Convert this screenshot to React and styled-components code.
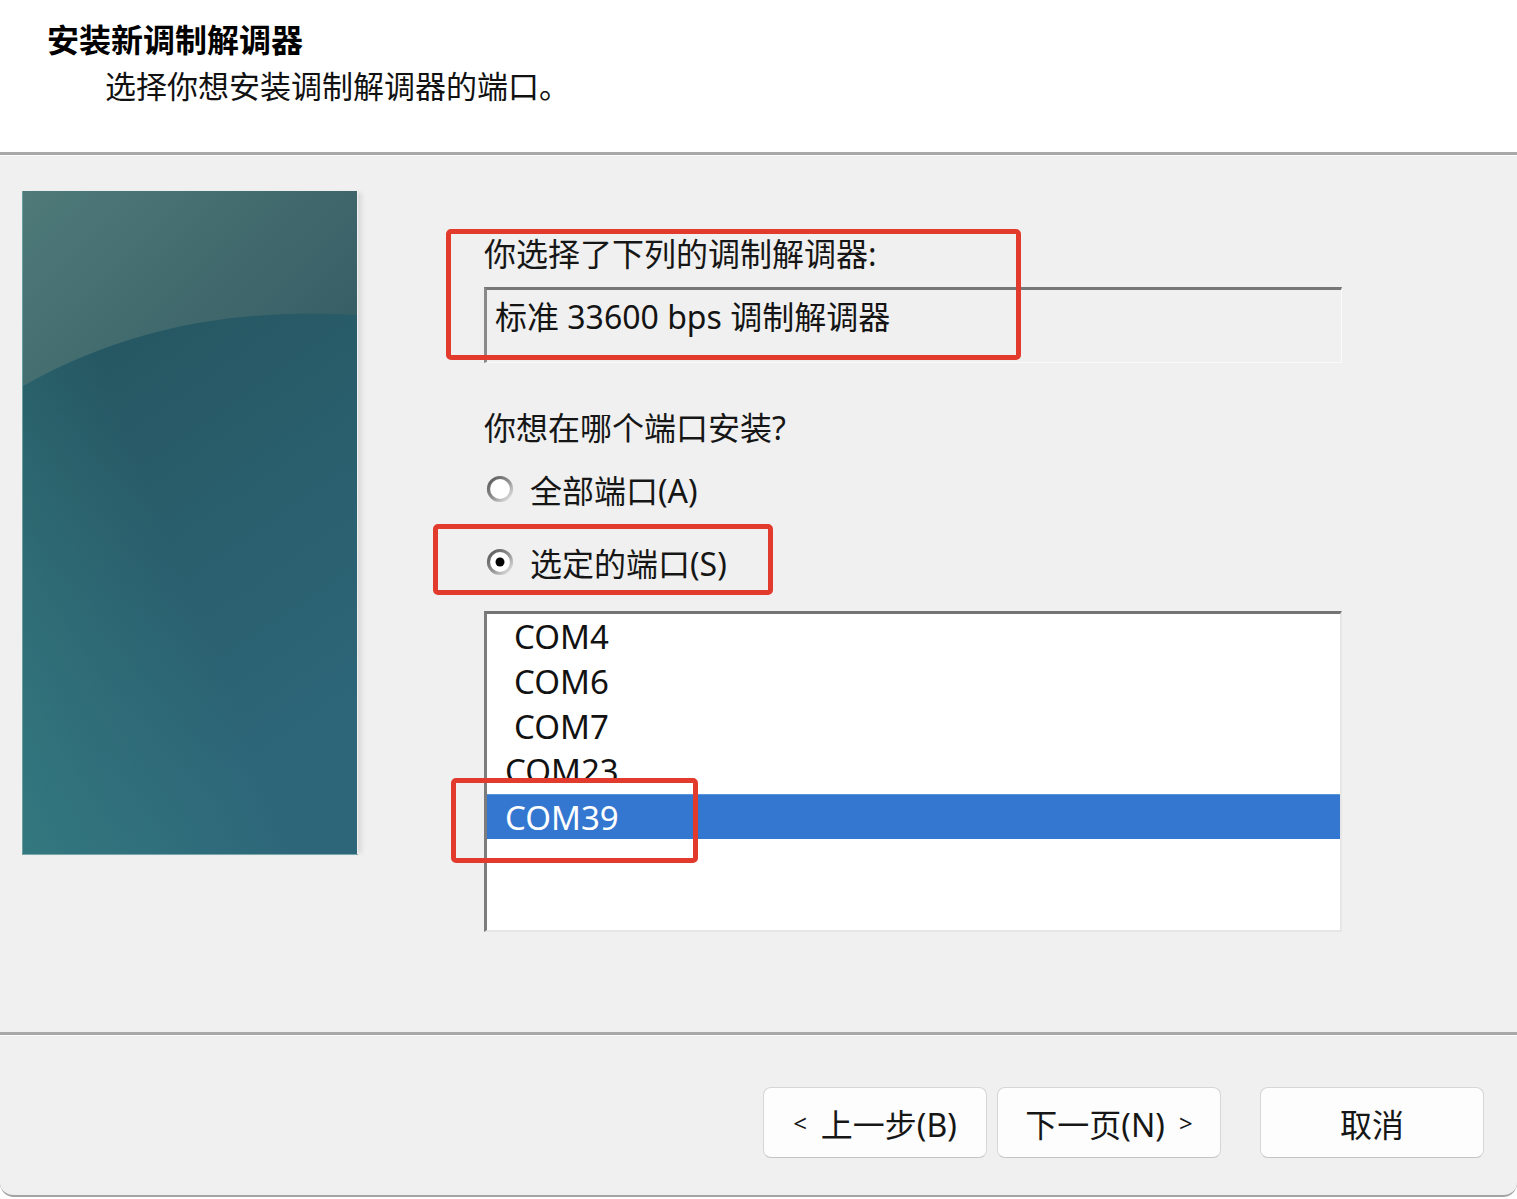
import React from 'react'
import styled, { createGlobalStyle } from 'styled-components'

const GlobalStyle = createGlobalStyle`
  html, body {
    margin: 0;
    padding: 0;
    background: #ffffff;
  }
  body {
    font-family: "Noto Sans", "Noto Sans CJK SC", sans-serif;
    color: #141414;
  }
`

const ports = [
  { name: 'COM4', indent: 27 },
  { name: 'COM6', indent: 27 },
  { name: 'COM7', indent: 27 },
  { name: 'COM23', indent: 18, clipped: true },
  { name: 'COM39', indent: 18, selected: true },
]

// window frame
const Window = styled.div`
  width: 1517px;
  height: 1197px;
  box-sizing: border-box;
  display: flex;
  flex-direction: column;
  background: #f0f0f0;
  border-bottom: 2px solid #a3a3a3;
  border-radius: 0 0 14px 14px;
  overflow: hidden;
`

const Header = styled.header`
  height: 155px;
  flex: none;
  box-sizing: border-box;
  padding: 20px 0 0 47px;
  background: #ffffff;
  border-bottom: 3px solid #a9a9a9;
`

const Title = styled.h1`
  margin: 0;
  font-size: 32px;
  line-height: 40px;
  font-weight: 700;
  color: #000;
`

const Subtitle = styled.p`
  margin: 6px 0 0 58px;
  font-size: 31px;
  line-height: 40px;
  color: #111;
`

const Body = styled.main`
  height: 877px;
  flex: none;
  display: flex;
  align-items: flex-start;
  padding-left: 22px;
  box-sizing: border-box;
  border-top: 1px solid #fbfbfb;
`

const SidePicture = styled.div`
  width: 336px;
  height: 664px;
  margin-top: 35px;
  flex: none;
  box-shadow: 6px 0 4px -2px #dcdcdc;
  border-left: 1px solid #6c9ea0;
  border-bottom: 1px solid #79a7ab;
  box-sizing: border-box;
  svg {
    display: block;
  }
`

const Content = styled.section`
  position: relative;
  margin-left: 126px;
  padding-top: 78px;
  width: 858px;
  display: flex;
  flex-direction: column;
`

const Label = styled.div`
  font-size: 32px;
  line-height: 40px;
  color: #161616;
  margin-top: ${p => p.$gap || 0}px;
  white-space: nowrap;
`

const ReadOnlyBox = styled.div`
  margin-top: 13px;
  height: 76px;
  box-sizing: border-box;
  padding: 7px 8px 0;
  border-top: 3px solid #777;
  border-left: 3px solid #8a8a8a;
  border-right: 1px solid #fafafa;
  border-bottom: 1px solid #fafafa;
  background: #f0f0f0;
  font-size: 32px;
  line-height: 40px;
  color: #141414;
  white-space: nowrap;
`

const RadioRow = styled.label`
  display: flex;
  align-items: center;
  height: 40px;
  margin-top: ${p => p.$gap}px;
  font-size: 32px;
  color: #161616;
  svg {
    flex: none;
    margin: 0 16px 0 2px;
  }
`

const ListBox = styled.ul`
  list-style: none;
  margin: 29px 0 0;
  padding: 0;
  height: 321px;
  box-sizing: border-box;
  background: #ffffff;
  border-top: 3px solid #747474;
  border-left: 3px solid #7c7c7c;
  border-right: 2px solid #e6e6e6;
  border-bottom: 2px solid #e6e6e6;
  overflow: hidden;
`

const ListItem = styled.li`
  height: 45px;
  box-sizing: border-box;
  padding-left: ${p => p.$indent}px;
  font-size: 33px;
  line-height: 45px;
  color: ${p => (p.$selected ? '#ffffff' : '#121212')};
  background: ${p => (p.$selected ? '#3477d0' : 'transparent')};
  border-top: ${p => (p.$selected ? '1px solid #5b93dc' : 'none')};
  span {
    display: block;
    height: ${p => (p.$clipped ? '34px' : 'auto')};
    overflow: hidden;
    transform: ${p => (p.$clipped ? 'translateY(-1px)' : 'none')};
  }
`

// red annotation marks lying over the dialog
const Mark = styled.div`
  position: absolute;
  left: ${p => p.$x}px;
  top: ${p => p.$y}px;
  width: ${p => p.$w}px;
  height: ${p => p.$h}px;
  box-sizing: border-box;
  border: 5px solid #e23a2c;
  border-radius: 5px;
  pointer-events: none;
`

const Footer = styled.footer`
  flex: 1;
  display: flex;
  justify-content: flex-end;
  align-items: flex-start;
  padding: 52px 33px 0 0;
  border-top: 3px solid #a9a9a9;
  box-shadow: inset 0 1px 0 #fbfbfb;
`

const Button = styled.button`
  width: 224px;
  height: 71px;
  margin-left: ${p => p.$gap || 0}px;
  background: #fdfdfd;
  border: 1px solid #d6d6d6;
  border-bottom-color: #c4c4c4;
  border-radius: 8px;
  font-family: "Noto Sans", "Noto Sans CJK SC", sans-serif;
  font-size: 32px;
  color: #161616;
  padding: 0;
  display: flex;
  align-items: center;
  justify-content: center;
  gap: ${p => p.$inner || 0}px;
`

const Angle = styled.span`
  font-size: 24px;
`

const Radio = ({ checked }) => (
  <svg width="28" height="28" viewBox="0 0 28 28">
    <defs>
      <linearGradient id="rim" x1="0" y1="0" x2="1" y2="1">
        <stop offset="0" stopColor="#555" />
        <stop offset="0.55" stopColor="#959595" />
        <stop offset="1" stopColor="#ececec" />
      </linearGradient>
    </defs>
    <circle cx="14" cy="14" r="11.5" fill="#ffffff" stroke="url(#rim)" strokeWidth="3.2" />
    {checked && <circle cx="14" cy="14" r="4.5" fill="#050505" />}
  </svg>
)

const Picture = () => (
  <svg width="334" height="663" viewBox="0 0 334 663">
    <defs>
      <linearGradient id="deep" x1="0" y1="0" x2="0.35" y2="1">
        <stop offset="0" stopColor="#21525d" />
        <stop offset="0.45" stopColor="#285b67" />
        <stop offset="1" stopColor="#2d6679" />
      </linearGradient>
      <linearGradient id="glow" x1="0" y1="1" x2="0.5" y2="0.6">
        <stop offset="0" stopColor="#347a80" stopOpacity="0.9" />
        <stop offset="1" stopColor="#347a80" stopOpacity="0" />
      </linearGradient>
      <linearGradient id="gloss" x1="0" y1="0" x2="1" y2="0.6">
        <stop offset="0" stopColor="#4f7a79" />
        <stop offset="1" stopColor="#385f66" />
      </linearGradient>
    </defs>
    <rect width="334" height="663" fill="url(#deep)" />
    <rect width="334" height="663" fill="url(#glow)" />
    <path d="M0 0 H334 V124 C250 120 130 122 0 195 Z" fill="url(#gloss)" />
  </svg>
)

const App = () => (
  <>
    <GlobalStyle />
    <Window>
      <Header>
        <Title>安装新调制解调器</Title>
        <Subtitle>选择你想安装调制解调器的端口。</Subtitle>
      </Header>

      <Body>
        <SidePicture>
          <Picture />
        </SidePicture>

        <Content>
          <Label>你选择了下列的调制解调器:</Label>
          <ReadOnlyBox>标准 33600 bps 调制解调器</ReadOnlyBox>

          <Label $gap={45}>你想在哪个端口安装?</Label>
          <RadioRow $gap={21}>
            <Radio />
            全部端口(A)
          </RadioRow>
          <RadioRow $gap={33}>
            <Radio checked />
            选定的端口(S)
          </RadioRow>

          <ListBox>
            {ports.map(p => (
              <ListItem
                key={p.name}
                $indent={p.indent}
                $selected={p.selected}
                $clipped={p.clipped}
              >
                <span>{p.name}</span>
              </ListItem>
            ))}
          </ListBox>

          <Mark $x={-38} $y={73} $w={575} $h={131} />
          <Mark $x={-51} $y={368} $w={340} $h={71} />
          <Mark $x={-33} $y={622} $w={247} $h={85} />
        </Content>
      </Body>

      <Footer>
        <Button $inner={14}>
          <Angle>&lt;</Angle>上一步(B)
        </Button>
        <Button $gap={10} $inner={14}>
          下一页(N)<Angle>&gt;</Angle>
        </Button>
        <Button $gap={39}>取消</Button>
      </Footer>
    </Window>
  </>
)

export default App
